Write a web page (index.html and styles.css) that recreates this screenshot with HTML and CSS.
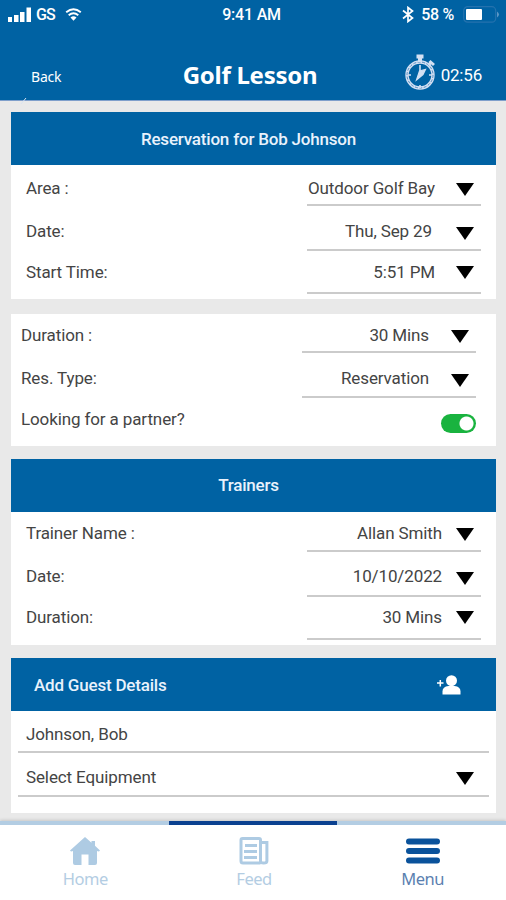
FILE: index.html
```html
<!DOCTYPE html>
<html lang="en">
<head>
    <meta charset="UTF-8">
    <meta name="viewport" content="width=device-width, initial-scale=1.0">
    <title>Golf Lesson</title>
    <link rel="stylesheet" href="styles.css">
</head>
<body>

    <!-- Status bar + title -->
    <header class="header">
        <div class="status-bar">
            <div class="status-left">
                <svg width="24" height="15" viewBox="0 0 24 15" fill="#fff"><path d="M0 10h4v5H0zM6 8h4.500v7H6zM12 5h4.500v10H12zM18.500 0.500h4.500V15h-4.500z"/></svg>
                <span class="carrier">GS</span>
                <svg width="17" height="13" viewBox="0 0 16 13" fill="none" stroke="#fff" stroke-width="1.900"><path d="M.7 4.300Q8-1.700 15.300 4.300M3.200 7.200Q8 3.200 12.800 7.200"/><path d="M5 9.400Q8 7.200 11 9.400L8 12.800z" fill="#fff" stroke="none"/></svg>
            </div>
            <div class="status-time">9:41 AM</div>
            <div class="status-right">
                <svg width="12" height="17" viewBox="0 0 12 17" fill="none" stroke="#fff" stroke-width="1.700"><path d="M1 4.500l9.500 7.500L6 15.500V1.500L10.500 5 1 12.500"/></svg>
                <span class="percent">58 %</span>
                <svg width="37" height="17" viewBox="0 0 37 17"><rect x=".7" y=".7" width="32" height="15.500" rx="4" fill="none" stroke="#2472ae" stroke-width="1.200"/><rect x="3" y="3" width="16" height="11" rx="1" fill="#fff"/><path d="M34 5.500q4 3 0 6z" fill="#5b97c6"/></svg>
            </div>
        </div>
        <div class="title-bar">
            <a class="back">Back</a>
            <h1>Golf Lesson</h1>
            <div class="timer">
                <svg width="32" height="37" viewBox="0 0 32 37" fill="none" stroke="#d3e0f3">
                    <circle cx="16" cy="21" r="13" stroke-width="3.400"/>
                    <circle cx="16" cy="21" r="13" stroke="#3778b3" stroke-width=".8" stroke-dasharray="3 1.500"/>
                    <path d="M12.500 2.500h7M16 3v5" stroke-width="4"/>
                    <path d="M24.500 11l3-3M25.500 7l4.500 4" stroke-width="3"/>
                    <path d="M16 11v10M16 31v3M4 21h3M25 21h3" stroke-width="1.600"/>
                    <path d="M12.500 26L15.500 17l6-1.500-2.500 5z" fill="#d3e0f3" stroke-width="1.200"/>
                </svg>
                <span class="timer-value">02:56</span>
            </div>
        </div>
        <svg class="tick" width="8" height="8" viewBox="0 0 8 8" stroke="#d9e4f2"><path d="M1 7l5-6"/></svg>
    </header>

    <main class="content">

        <section class="card">
            <h2>Reservation for Bob Johnson</h2>
            <div class="row row-first">
                <span class="label">Area :</span>
                <div class="field"><span class="value">Outdoor Golf Bay</span><i class="arrow"></i></div>
            </div>
            <div class="row row-second">
                <span class="label">Date:</span>
                <div class="field"><span class="value value-day">Thu, Sep 29</span><i class="arrow"></i></div>
            </div>
            <div class="row row-third">
                <span class="label">Start Time:</span>
                <div class="field"><span class="value">5:51 PM</span><i class="arrow"></i></div>
            </div>
        </section>

        <section class="card card-plain">
            <div class="row row-first">
                <span class="label">Duration :</span>
                <div class="field"><span class="value">30 Mins</span><i class="arrow"></i></div>
            </div>
            <div class="row row-second">
                <span class="label">Res. Type:</span>
                <div class="field"><span class="value">Reservation</span><i class="arrow"></i></div>
            </div>
            <div class="row row-third">
                <span class="label">Looking for a partner?</span>
                <div class="toggle"></div>
            </div>
        </section>

        <section class="card card-trainers">
            <h2>Trainers</h2>
            <div class="row row-first">
                <span class="label">Trainer Name :</span>
                <div class="field"><span class="value">Allan Smith</span><i class="arrow"></i></div>
            </div>
            <div class="row row-second">
                <span class="label">Date:</span>
                <div class="field"><span class="value">10/10/2022</span><i class="arrow"></i></div>
            </div>
            <div class="row row-third">
                <span class="label">Duration:</span>
                <div class="field"><span class="value">30 Mins</span><i class="arrow"></i></div>
            </div>
        </section>

        <section class="card card-guest">
            <h2>
                <span>Add Guest Details</span>
                <svg width="24" height="20" viewBox="0 0 24 20" fill="#fff"><circle cx="14.500" cy="5.700" r="5.500"/><path d="M5.500 19.500v-3q0-5 6-5.500h6q6 .5 6 5.500v3z"/><path d="M0 8h6.500M3.300 5v6.500" stroke="#fff" stroke-width="1.500"/></svg>
            </h2>
            <div class="guest-row guest-name"><span>Johnson, Bob</span></div>
            <div class="guest-row guest-equipment"><span>Select Equipment</span><i class="arrow"></i></div>
        </section>

    </main>

    <!-- Bottom tabs -->
    <nav class="tabs">
        <a class="tab">
            <svg width="32" height="30" viewBox="0 0 32 30" fill="#aecbe3"><path d="M16 1L1 14.500q1 1.500 3 .5v12q0 2 2 2h6.500V18.500h7V29H26q2 0 2-2V15q2 1 3-.5L26 9.800V5h-3.500v1.700z"/></svg>
            <span>Home</span>
        </a>
        <a class="tab tab-current">
            <svg width="32" height="30" viewBox="0 0 32 30" fill="none" stroke="#aecbe3" stroke-width="3"><path d="M22.500 27H5q-2 0-2-2V4q0-1.500 1.500-1.500h16.500q1.500 0 1.500 1.500v21q0 2 3.200 2t3.200-2V6.500h-6"/><path d="M7 9.500h12M6 15.500h13M6 21.500h13" stroke-width="2.800"/></svg>
            <span>Feed</span>
        </a>
        <a class="tab tab-menu">
            <svg width="34" height="30" viewBox="0 0 34 30" stroke="#0a529b" stroke-width="6" stroke-linecap="round"><path d="M3 5.500h28M3 15h28M3 24.500h28"/></svg>
            <span>Menu</span>
        </a>
    </nav>

</body>
</html>
```

FILE: styles.css
```css
* {
    box-sizing: border-box;
}

body {
    margin: 0;
    height: 900px;
    display: flex;
    flex-direction: column;
    overflow: hidden;
    background-color: #e9e9e9;
    font-family: Roboto, sans-serif;
    color: #444;
}

/* Header */
.header {
    position: relative;
    height: 101px;
    background-color: #0062a3;
    border-bottom: 1px solid #7f9fcb;
    color: #fff;
}

.status-bar {
    display: grid;
    grid-template-columns: 1fr auto 1fr;
    align-items: center;
    height: 29px;
    padding: 0 6px 0 8px;
    font-size: 16px;
    font-weight: 500;
    line-height: 29px;
}

.status-time {
    padding-right: 5px;
    letter-spacing: -0.2px;
}

.status-left,
.status-right {
    display: flex;
    align-items: center;
}

.status-left {
    gap: 4px;
}

.carrier {
    width: 25px;
    letter-spacing: -0.8px;
}

.status-right {
    justify-content: flex-end;
}

.percent {
    margin: 0 9px 0 7px;
    letter-spacing: -0.3px;
    white-space: nowrap;
}

.title-bar {
    display: grid;
    grid-template-columns: 1fr auto 1fr;
    align-items: center;
    height: 70px;
    padding: 0 24px 0 31px;
}

.back {
    padding-top: 25px;
    font: 14px "Noto Sans", sans-serif;
    line-height: 20px;
    letter-spacing: -0.2px;
}

h1 {
    margin: 22px 13px 0 0;
    font: bold 24px "Noto Sans", sans-serif;
    line-height: 24px;
    letter-spacing: -0.25px;
}

.timer {
    display: flex;
    justify-content: flex-end;
    align-items: center;
    gap: 5px;
    padding-top: 17px;
    font-size: 17px;
    letter-spacing: -0.2px;
}

.timer-value {
    padding-top: 5px;
}

.tick {
    position: absolute;
    left: 20px;
    bottom: -5px;
}

/* Cards */
.content {
    flex: 1;
    padding: 11px 10px 0 11px;
}

.card {
    height: 187px;
    margin-bottom: 15px;
    background-color: #fff;
}

.card-plain {
    height: 132px;
    margin-bottom: 13px;
}

.card-trainers {
    height: 186px;
    margin-bottom: 13px;
}

.card-guest {
    height: 155px;
    margin-bottom: 0;
}

h2 {
    display: flex;
    align-items: center;
    justify-content: center;
    height: 53px;
    margin: 0;
    padding-right: 10px;
    background-color: #0062a3;
    color: #e9f2fc;
    font-size: 17px;
    font-weight: 500;
    letter-spacing: -0.2px;
}

.card-trainers h2 {
    padding-bottom: 1px;
}

.card-guest h2 {
    justify-content: space-between;
    padding: 0 35px 0 23px;
}

/* Rows */
.row {
    display: flex;
    justify-content: space-between;
    padding: 0 15px;
    font-size: 17px;
    line-height: 20px;
    letter-spacing: -0.12px;
}

.card-plain .row {
    padding: 0 20px 0 10px;
}

.row-first {
    height: 41px;
}

.row-second {
    height: 45px;
}

.row-third {
    height: 43px;
}

.card-plain .row-first {
    height: 39px;
}

.card-trainers .row-first {
    height: 40px;
}

.row-first .label,
.row-first .value {
    padding-top: 13px;
}

.row-second .label,
.row-second .value {
    padding-top: 15px;
}

.row-third .label,
.row-third .value {
    padding-top: 11px;
}

.card-plain .row-first .label,
.card-plain .row-first .value,
.card-trainers .row-first .label,
.card-trainers .row-first .value {
    padding-top: 11px;
}

.card-trainers .row-second .label,
.card-trainers .row-second .value {
    padding-top: 14px;
}

.card-trainers .row-third .label,
.card-trainers .row-third .value {
    padding-top: 10px;
}

.field {
    display: flex;
    justify-content: flex-end;
    width: 174px;
    border-bottom: 2px solid #cbcbcb;
}

.value {
    margin-right: 21px;
    white-space: nowrap;
}

.value-day {
    margin-right: 24px;
}

.card-plain .value {
    margin-right: 22px;
}

.card-trainers .value {
    margin-right: 14px;
}

.arrow {
    width: 18px;
    height: 13px;
    margin: 18px 7px 0 0;
    background-color: #000;
    clip-path: polygon(0 0, 100% 0, 50% 100%);
}

.row-second .arrow {
    margin-top: 21px;
}

.row-third .arrow {
    margin-top: 15px;
}

.card-plain .row-first .arrow {
    margin-top: 16px;
}

.card-trainers .row-first .arrow {
    margin-top: 16px;
}

.card-trainers .row-second .arrow {
    margin-top: 20px;
}

.card-trainers .row-third .arrow {
    margin-top: 14px;
}

.toggle {
    width: 35px;
    height: 19px;
    margin-top: 16px;
    border-radius: 10px;
    background: radial-gradient(circle at 25.5px 9.5px, #fff 6.5px, #19b33f 7.5px);
}

/* Guest */
.guest-row {
    display: flex;
    justify-content: space-between;
    margin: 0 7px;
    padding: 0 8px;
    border-bottom: 2px solid #cbcbcb;
    font-size: 17px;
    line-height: 20px;
    letter-spacing: -0.12px;
}

.guest-name {
    height: 42px;
    padding-top: 13px;
}

.guest-equipment {
    height: 44px;
    padding-top: 14px;
}

.guest-equipment .arrow {
    margin: 5px 7px 0 0;
}

/* Tabs */
.tabs {
    display: flex;
    height: 79px;
    background-color: #fff;
    box-shadow: 0 -1px 3px rgba(0, 0, 0, 0.15);
}

.tab {
    flex: 1;
    display: flex;
    flex-direction: column;
    align-items: center;
    padding: 11px 0 0 2px;
    border-top: 4px solid #b3cde3;
    color: #b3cde3;
    font: 16.5px "Noto Sans", sans-serif;
    line-height: 26px;
    letter-spacing: -0.5px;
}

.tab-current {
    border-top-color: #0b4190;
}

.tab-menu {
    color: #5b7fb0;
}
```
